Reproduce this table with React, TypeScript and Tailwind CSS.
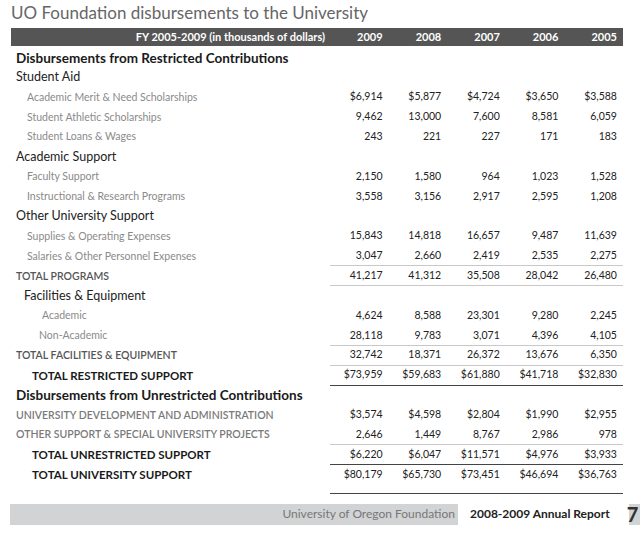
import React from "react";

type Row = {
  label: string;
  kind: "section" | "cat" | "item" | "total" | "grand" | "caps";
  indent?: string;
  values?: string[];
  line?: "light" | "dark";
};

const rows: Row[] = [
  { label: "Disbursements from Restricted Contributions", kind: "section" },
  { label: "Student Aid", kind: "cat" },
  { label: "Academic Merit & Need Scholarships", kind: "item", values: ["$6,914", "$5,877", "$4,724", "$3,650", "$3,588"] },
  { label: "Student Athletic Scholarships", kind: "item", values: ["9,462", "13,000", "7,600", "8,581", "6,059"] },
  { label: "Student Loans & Wages", kind: "item", values: ["243", "221", "227", "171", "183"] },
  { label: "Academic Support", kind: "cat" },
  { label: "Faculty Support", kind: "item", values: ["2,150", "1,580", "964", "1,023", "1,528"] },
  { label: "Instructional & Research Programs", kind: "item", values: ["3,558", "3,156", "2,917", "2,595", "1,208"] },
  { label: "Other University Support", kind: "cat" },
  { label: "Supplies & Operating Expenses", kind: "item", values: ["15,843", "14,818", "16,657", "9,487", "11,639"] },
  { label: "Salaries & Other Personnel Expenses", kind: "item", values: ["3,047", "2,660", "2,419", "2,535", "2,275"], line: "light" },
  { label: "TOTAL PROGRAMS", kind: "total", values: ["41,217", "41,312", "35,508", "28,042", "26,480"], line: "light" },
  { label: "Facilities & Equipment", kind: "cat", indent: "pl-[13px]" },
  { label: "Academic", kind: "item", indent: "pl-[31px]", values: ["4,624", "8,588", "23,301", "9,280", "2,245"] },
  { label: "Non-Academic", kind: "item", indent: "pl-[28px]", values: ["28,118", "9,783", "3,071", "4,396", "4,105"], line: "light" },
  { label: "TOTAL FACILITIES & EQUIPMENT", kind: "total", values: ["32,742", "18,371", "26,372", "13,676", "6,350"], line: "light" },
  { label: "TOTAL RESTRICTED SUPPORT", kind: "grand", values: ["$73,959", "$59,683", "$61,880", "$41,718", "$32,830"], line: "dark" },
  { label: "Disbursements from Unrestricted Contributions", kind: "section" },
  { label: "UNIVERSITY DEVELOPMENT AND ADMINISTRATION", kind: "caps", values: ["$3,574", "$4,598", "$2,804", "$1,990", "$2,955"] },
  { label: "OTHER SUPPORT & SPECIAL UNIVERSITY PROJECTS", kind: "caps", values: ["2,646", "1,449", "8,767", "2,986", "978"], line: "light" },
  { label: "TOTAL UNRESTRICTED SUPPORT", kind: "grand", values: ["$6,220", "$6,047", "$11,571", "$4,976", "$3,933"], line: "dark" },
  { label: "TOTAL UNIVERSITY SUPPORT", kind: "grand", values: ["$80,179", "$65,730", "$73,451", "$46,694", "$36,763"] },
];

const labelStyle: Record<Row["kind"], string> = {
  section: "pl-[5px] text-[13.5px] font-bold text-[#1a1a1a]",
  cat: "pl-[5px] text-[12.5px] text-[#222]",
  item: "pl-[16px] text-[10.5px] text-[#8a8a8a]",
  total: "pl-[5px] text-[10.5px] font-semibold text-[#555]",
  grand: "pl-[21px] text-[11.5px] font-bold text-[#1a1a1a]",
  caps: "pl-[5px] text-[10.5px] font-semibold text-[#7a7a7a]",
};

const years = ["2009", "2008", "2007", "2006", "2005"];

function Numbers({ values, line }: { values?: string[]; line?: Row["line"] }) {
  const border =
    line === "dark"
      ? "border-b-[1.5px] border-[#444]"
      : line === "light"
      ? "border-b border-[#c8c8c8]"
      : "border-b border-transparent";
  return (
    <div className={`flex h-full w-[293px] ${border}`}>
      {(values ?? ["", "", "", "", ""]).map((v, i) => (
        <div key={i} className="flex w-[58.6px] items-center justify-end pr-[6px] text-[10.5px] text-[#222]">
          {v}
        </div>
      ))}
    </div>
  );
}

export default function App() {
  return (
    <div className="h-[534px] w-[640px] overflow-hidden bg-white" style={{ fontFamily: "Lato, 'Open Sans', sans-serif" }}>
      <div className="pl-[11px] pt-[1px] text-[17px] leading-[24px] text-[#666]">
        UO Foundation disbursements to the University
      </div>
      <div className="ml-[11px] mt-[3px] w-[612px]">
        <div className="flex h-[18px] items-center bg-[#555] text-[11px] font-bold text-white">
          <div className="w-[319px] pr-[5px] text-right">FY 2005-2009 (in thousands of dollars)</div>
          {years.map((y) => (
            <div key={y} className="w-[58.6px] pr-[6px] text-right">
              {y}
            </div>
          ))}
        </div>
        <div className="mt-[2px]">
          {rows.map((r, i) => (
            <div key={i} className="flex h-[19.86px]">
              <div className={`flex w-[319px] items-center whitespace-nowrap ${labelStyle[r.kind]} ${r.indent ?? ""}`}>
                {r.label}
              </div>
              <Numbers values={r.values} line={r.line} />
            </div>
          ))}
          <div className="flex">
            <div className="w-[319px]" />
            <div className="h-[9px] w-[293px] border-b-[1.5px] border-[#444]" />
          </div>
        </div>
      </div>
      <div className="mt-[10px] flex items-center">
        <div className="ml-[10px] flex h-[21px] w-[448px] items-center justify-end bg-[#d2d3d4] pr-[3px] text-[12px] text-[#777]">
          University of Oregon Foundation
        </div>
        <div className="ml-[12px] w-[155px] text-[12px] font-bold text-[#222]">2008-2009 Annual Report</div>
        <div className="flex h-[21px] w-[15px] items-center justify-center bg-[linear-gradient(to_right,white_4px,#d2d3d4_4px)] text-[20px] font-bold leading-none text-[#333]">
          7
        </div>
      </div>
    </div>
  );
}
